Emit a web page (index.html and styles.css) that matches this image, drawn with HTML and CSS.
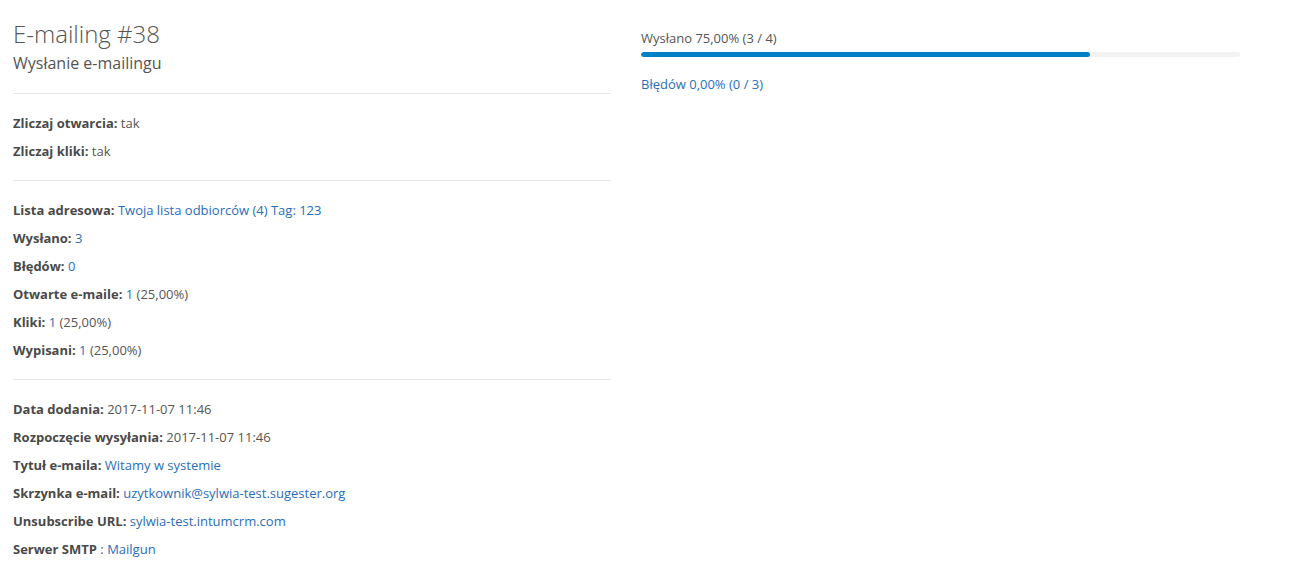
FILE: index.html
```html
<!DOCTYPE html>
<html lang="pl">
<head>
<meta charset="utf-8">
<title>E-mailing #38</title>
<link rel="stylesheet" href="styles.css">
</head>
<body>
<div class="page">
  <div class="col col-left">
    <header class="head">
      <h1 class="title">E-mailing #38</h1>
      <div class="subtitle">Wysłanie e-mailingu</div>
    </header>
    <section class="section">
      <p class="row"><b>Zliczaj otwarcia:</b> tak</p>
      <p class="row"><b>Zliczaj kliki:</b> tak</p>
    </section>
    <section class="section">
      <p class="row"><b>Lista adresowa:</b> <a href="#">Twoja lista odbiorców (4) Tag: 123</a></p>
      <p class="row"><b>Wysłano:</b> <a href="#">3</a></p>
      <p class="row"><b>Błędów:</b> <a href="#">0</a></p>
      <p class="row"><b>Otwarte e-maile:</b> <a href="#">1</a> (25,00%)</p>
      <p class="row"><b>Kliki:</b> <a href="#">1</a> (25,00%)</p>
      <p class="row"><b>Wypisani:</b> <a href="#">1</a> (25,00%)</p>
    </section>
    <section class="section last">
      <p class="row"><b>Data dodania:</b> 2017-11-07 11:46</p>
      <p class="row"><b>Rozpoczęcie wysyłania:</b> 2017-11-07 11:46</p>
      <p class="row"><b>Tytuł e-maila:</b> <a href="#">Witamy w systemie</a></p>
      <p class="row"><b>Skrzynka e-mail:</b> <a href="#">uzytkownik@sylwia-test.sugester.org</a></p>
      <p class="row"><b>Unsubscribe URL:</b> <a href="#">sylwia-test.intumcrm.com</a></p>
      <p class="row"><b>Serwer SMTP</b> : <a href="#">Mailgun</a></p>
    </section>
  </div>
  <div class="col col-right">
    <div class="progress-label">Wysłano 75,00% (3 / 4)</div>
    <div class="progress"><div class="progress-bar" style="width: 75%"></div></div>
    <a class="errors" href="#">Błędów 0,00% (0 / 3)</a>
  </div>
</div>
</body>
</html>
```
FILE: styles.css
```css
html, body {
  margin: 0;
  padding: 0;
  background: #fff;
}
body {
  font-family: "Open Sans", "Liberation Sans", sans-serif;
  font-size: 13px;
  line-height: 18px;
  color: #555;
}
a {
  color: #2a6ebb;
  text-decoration: none;
}
.page {
  display: flex;
  gap: 30px;
  padding-left: 13px;
}
.col-left {
  width: 598px;
}
.col-right {
  width: 599px;
  padding-top: 29px;
  display: flex;
  flex-direction: column;
}
.head {
  padding-top: 19px;
  padding-bottom: 18px;
  border-bottom: 1px solid #e6e6e6;
}
.title {
  margin: 0;
  font-size: 24px;
  line-height: 30px;
  font-weight: 300;
  color: #555;
}
.subtitle {
  margin-top: 2px;
  font-size: 16px;
  line-height: 24px;
  color: #555;
}
.section {
  padding: 20px 0;
  border-bottom: 1px solid #e6e6e6;
  display: flex;
  flex-direction: column;
  gap: 10px;
}
.section.last {
  border-bottom: none;
}
.row {
  margin: 0;
}
.row b {
  font-weight: 700;
  color: #4a4a4a;
}
.progress-label {
  line-height: 18px;
}
.progress {
  margin-top: 5px;
  height: 5px;
  background: #f2f2f2;
  border-radius: 3px;
  overflow: hidden;
}
.progress-bar {
  height: 100%;
  background: #0080c6;
  border-radius: 3px;
}
.errors {
  margin-top: 18px;
  line-height: 18px;
  align-self: flex-start;
}
```
